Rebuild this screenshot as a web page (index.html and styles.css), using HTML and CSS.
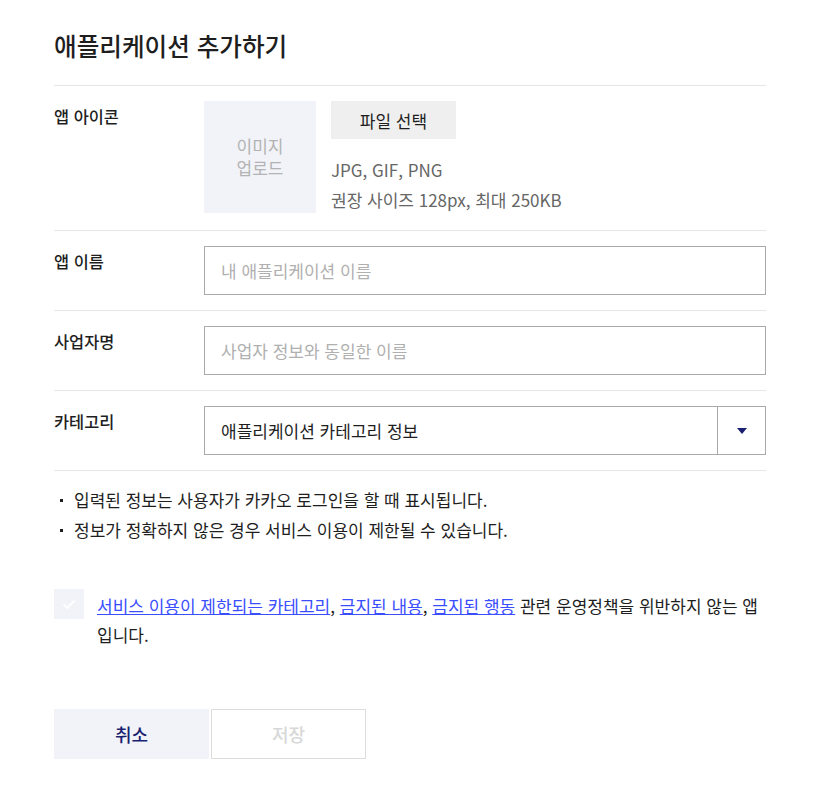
FILE: index.html
```html
<!DOCTYPE html>
<html lang="ko">
<head>
<meta charset="utf-8">
<link rel="stylesheet" href="styles.css">
</head>
<body>
<div class="page">
  <h1 class="title">애플리케이션 추가하기</h1>
  <div class="row">
    <div class="label">앱 아이콘</div>
    <div class="field icon-field">
      <div class="upload">이미지<br>업로드</div>
      <div class="upload-info">
        <button class="file-btn">파일 선택</button>
        <p class="hint">JPG, GIF, PNG<br>권장 사이즈 128px, 최대 250KB</p>
      </div>
    </div>
  </div>
  <div class="row">
    <div class="label">앱 이름</div>
    <div class="field"><div class="input placeholder">내 애플리케이션 이름</div></div>
  </div>
  <div class="row">
    <div class="label">사업자명</div>
    <div class="field"><div class="input placeholder">사업자 정보와 동일한 이름</div></div>
  </div>
  <div class="row">
    <div class="label">카테고리</div>
    <div class="field">
      <div class="select">
        <span class="select-text">애플리케이션 카테고리 정보</span>
        <span class="select-arrow"><svg width="10" height="6" viewBox="0 0 10 6"><path d="M0 0H10L5 6Z" fill="#1a1f71"/></svg></span>
      </div>
    </div>
  </div>
  <ul class="notes">
    <li>입력된 정보는 사용자가 카카오 로그인을 할 때 표시됩니다.</li>
    <li>정보가 정확하지 않은 경우 서비스 이용이 제한될 수 있습니다.</li>
  </ul>
  <div class="agree">
    <span class="checkbox"><svg width="14" height="11" viewBox="0 0 14 11"><path d="M1.5 5.5L5.2 9L12.5 1.5" fill="none" stroke="#fff" stroke-width="1.8"/></svg></span>
    <p class="agree-text"><a href="#">서비스 이용이 제한되는 카테고리</a>, <a href="#">금지된 내용</a>, <a href="#">금지된 행동</a> 관련 운영정책을 위반하지 않는 앱입니다.</p>
  </div>
  <div class="buttons">
    <button class="btn btn-cancel">취소</button>
    <button class="btn btn-save">저장</button>
  </div>
</div>
</body>
</html>
```

FILE: styles.css
```css
* { box-sizing: border-box; }
body {
  margin: 0;
  background: #fff;
  font-family: "Noto Sans CJK KR", "Noto Sans", sans-serif;
  color: #1e1e1e;
}
.page {
  width: 712px;
  margin-left: 54px;
  padding-top: 28px;
}
.title {
  margin: 0;
  font-size: 24.6px;
  font-weight: 500;
  line-height: 34px;
  padding-bottom: 23px;
  border-bottom: 1px solid #e6e6e6;
}
.row {
  display: flex;
  padding: 15px 0 15px;
  border-bottom: 1px solid #e6e6e6;
}
.label {
  width: 150px;
  flex: none;
  font-size: 16.4px;
  font-weight: 500;
  line-height: 24px;
  padding-top: 3px;
}
.field { flex: 1; }
.icon-field { display: flex; gap: 15px; }
.upload {
  width: 112px;
  height: 112px;
  background: #f2f3f8;
  color: #b3b3b3;
  font-size: 17px;
  line-height: 22px;
  display: flex;
  align-items: center;
  justify-content: center;
  text-align: center;
}
.file-btn {
  width: 125px;
  height: 38px;
  border: 0;
  background: #efefef;
  font: inherit;
  font-size: 17px;
  color: #1e1e1e;
  padding: 0;
}
.hint {
  margin: 16px 0 0;
  font-size: 17px;
  line-height: 30px;
  color: #666;
}
.input, .select {
  height: 49px;
  border: 1px solid #aaa;
  font-size: 17px;
  display: flex;
  align-items: center;
}
.input { padding-left: 16px; }
.placeholder { color: #b0b0b0; }
.select-text { flex: 1; padding-left: 16px; color: #1e1e1e; }
.select-arrow {
  width: 48px;
  height: 100%;
  border-left: 1px solid #aaa;
  display: flex;
  align-items: center;
  justify-content: center;
}
.notes {
  list-style: none;
  margin: 0;
  padding: 14px 0 0;
  font-size: 17px;
  line-height: 30px;
}
.notes li { position: relative; padding-left: 20px; }
.notes li::before {
  content: "";
  position: absolute;
  left: 6px;
  top: 14px;
  width: 3px;
  height: 3px;
  background: #1e1e1e;
}
.agree {
  display: flex;
  gap: 13px;
  margin-top: 44px;
}
.checkbox {
  width: 30px;
  height: 30px;
  flex: none;
  background: #f2f3f8;
  display: flex;
  align-items: center;
  justify-content: center;
}
.agree-text {
  margin: 2px 0 0;
  font-size: 17px;
  line-height: 29px;
}
.agree-text a { color: #3a4dff; }
.buttons {
  display: flex;
  gap: 2px;
  margin-top: 60px;
}
.btn {
  width: 155px;
  height: 50px;
  font: inherit;
  font-size: 18px;
  font-weight: 500;
}
.btn-cancel { border: 0; background: #f2f3f8; color: #1a1f71; }
.btn-save { border: 1px solid #ddd; background: #fff; color: #d8d8d8; }
```
